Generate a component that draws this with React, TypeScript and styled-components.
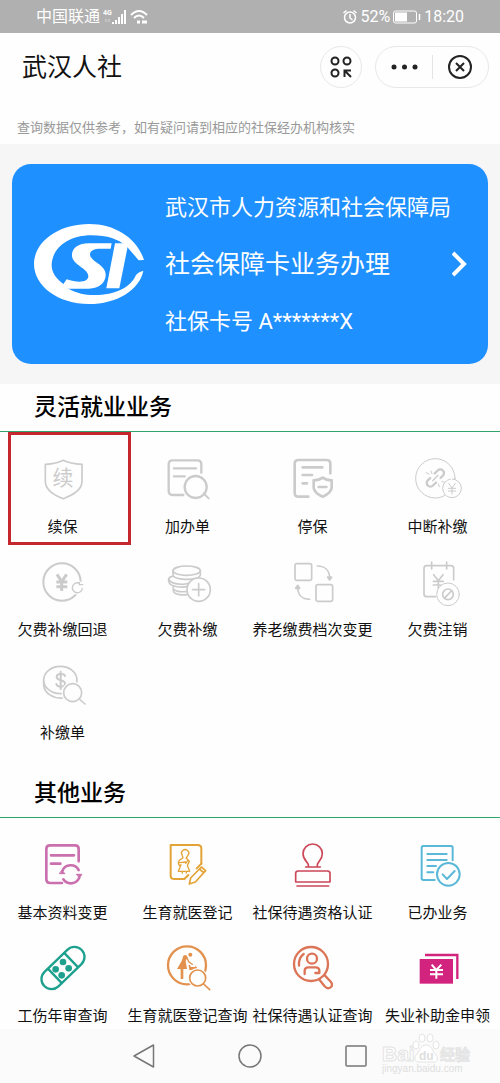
import React from "react";
import styled, { createGlobalStyle } from "styled-components";

const GlobalStyle = createGlobalStyle`
  * { box-sizing: border-box; }
  body {
    margin: 0;
    background: #fefefe;
    color: #111;
    font-family: Roboto, "Noto Sans CJK SC", sans-serif;
  }
  button {
    margin: 0;
    padding: 0;
    border: 0;
    background: none;
    color: inherit;
    font: inherit;
    cursor: pointer;
  }
  svg { display: block; flex: none; }
`;

const Page = styled.div`
  display: flex;
  flex-direction: column;
  min-height: 100vh;
`;

const StatusBar = styled.div`
  display: flex;
  align-items: center;
  justify-content: space-between;
  height: 33px;
  padding: 1px 36px 0;
  background: #b0b0b0;
  color: #fff;
  font-size: 16px;
  line-height: 24px;
`;

const StatusGroup = styled.div`
  display: flex;
  align-items: center;
  gap: 3px;
`;

const Header = styled.header`
  display: flex;
  align-items: center;
  height: 68px;
  padding: 0 11px 0 22px;
`;

const Title = styled.h1`
  flex: 1;
  margin: 0;
  padding-top: 2px;
  font-size: 25px;
  font-weight: 400;
  line-height: 36px;
`;

const RoundButton = styled.button`
  display: flex;
  align-items: center;
  justify-content: center;
  width: 42px;
  height: 42px;
  margin-right: 13px;
  border: 1px solid #e8e8e8;
  border-radius: 21px;
`;

const Capsule = styled.div`
  display: flex;
  align-items: center;
  width: 114px;
  height: 42px;
  border: 1px solid #e8e8e8;
  border-radius: 21px;
`;

const CapsuleButton = styled.button<{ $divided?: boolean }>`
  display: flex;
  flex: 1;
  align-items: center;
  justify-content: center;
  height: 24px;
  border-left: ${(p) => (p.$divided ? "1px solid #e4e4e4" : "0")};
`;

const Notice = styled.p`
  margin: 0;
  height: 43px;
  padding: 17px 17px 0;
  color: #999;
  font-size: 13px;
  line-height: 20px;
`;

const CardArea = styled.div`
  padding: 20px 12px;
  background: #f6f6f6;
`;

const Card = styled.button`
  display: flex;
  align-items: center;
  width: 100%;
  height: 200px;
  padding: 0 20px 0 22px;
  border-radius: 19px;
  background: #1e90ff;
  color: #fff;
  text-align: left;
`;

const CardText = styled.span`
  display: flex;
  flex: 1;
  flex-direction: column;
  gap: 21px;
  padding: 2px 0 0 21px;
  white-space: nowrap;
`;

const CardLine = styled.span<{ $large?: boolean }>`
  font-size: ${(p) => (p.$large ? 25 : 22)}px;
  line-height: 36px;
`;

const SectionTitle = styled.h2`
  height: 48px;
  margin: 0;
  padding: 7px 34px 0;
  border-bottom: 1px solid #2fa56b;
  color: #000;
  font-size: 23px;
  font-weight: 500;
  line-height: 34px;
`;

const Grid = styled.div<{ $bottom: number }>`
  display: grid;
  grid-template-columns: repeat(4, minmax(0, 1fr));
  gap: 21px 0;
  padding: 24px 0 ${(p) => p.$bottom}px;
`;

const Item = styled.button`
  position: relative;
  display: flex;
  flex-direction: column;
  align-items: center;
  gap: 12px;
  font-size: 15px;
  line-height: 22px;
  white-space: nowrap;
`;

const Highlight = styled.span`
  position: absolute;
  top: -24px;
  right: -6px;
  bottom: -7px;
  left: 8px;
  border: 3px solid #c4282e;
`;

const NavBar = styled.nav`
  position: relative;
  display: flex;
  align-items: center;
  justify-content: center;
  gap: 82px;
  height: 54px;
  margin-top: auto;
  background: #fbfbfb;
`;

const Watermark = styled.div`
  position: absolute;
  right: 28px;
  bottom: 8px;
`;

type IconProps = { color: string; width?: number; children: React.ReactNode };

const Icon = ({ color, width = 6, children }: IconProps) => (
  <svg
    width="48"
    height="48"
    viewBox="0 0 144 144"
    overflow="visible"
    fill="none"
    stroke={color}
    strokeWidth={width}
    strokeLinecap="round"
    strokeLinejoin="round"
    aria-hidden="true"
  >
    {children}
  </svg>
);

const GREY = "#cbcbcb";

const RenewIcon = () => (
  <Icon color={GREY} width={5}>
    <path d="M73 13C60 20 40 24 19 25V76C19 101 45 118 73 128C101 118 129 101 129 76V25C106 24 86 20 73 13Z" />
    <text x="72" y="88" textAnchor="middle" fontSize="63" fill={GREY} stroke="none">续</text>
  </Icon>
);

const AddFormIcon = () => (
  <Icon color={GREY} width={7}>
    <path d="M112 50V25Q112 13 100 13H26Q14 13 14 25V105Q14 117 26 117H58" />
    <path d="M30 37H96M30 61H62" />
    <circle cx="95" cy="93" r="33" />
    <path d="M119 112L134 127" strokeWidth="6" />
  </Icon>
);

const StopIcon = () => (
  <Icon color={GREY} width={8}>
    <path d="M124 52V23Q124 12 113 12H28Q17 12 17 23V110Q17 122 29 122H58" />
    <path d="M41 34H100M41 57H69M41 82H54M89 93H112" />
    <path d="M101 65C93 71 84 73 74 73V94C74 108 87 116 101 122C115 116 128 108 128 94V73C118 73 109 71 101 65Z" />
  </Icon>
);

const BreakIcon = () => (
  <Icon color={GREY} width={3}>
    <circle cx="64" cy="67" r="59" />
    <g transform="rotate(-45 64 66)" strokeWidth="7">
      <path d="M59 55H49A11 11 0 0 0 49 77H62" transform="translate(-6 0)" />
      <path d="M69 77H79A11 11 0 0 0 79 55H66" transform="translate(6 0)" />
    </g>
    <path d="M56 74L72 58" strokeWidth="4" />
    <path d="M51 45L54 53M37 50L45 54M73 84L76 92M84 77L90 78" />
    <circle cx="114" cy="97" r="28" fill="#fefefe" strokeDasharray="60 6" />
    <path d="M104 82L114 96L124 82M114 96V114M103 97H125M103 105H125" />
  </Icon>
);

const RefundIcon = () => (
  <Icon color={GREY} width={6}>
    <circle cx="69" cy="69" r="56" />
    <path d="M54 46L68 68L83 46M68 68V96M52 69H85M52 83H85" strokeWidth="9" strokeLinecap="butt" />
    <circle cx="115" cy="86" r="21" fill="#fefefe" stroke="none" />
    <path d="M120 72A15 15 0 1 0 130 88M131 77H121V70" strokeWidth="4" />
  </Icon>
);

const CoinsIcon = () => (
  <Icon color={GREY} width={5}>
    <ellipse cx="68" cy="35" rx="41" ry="14" />
    <path d="M27 35V47C27 66 109 66 109 47V35" />
    <path d="M25 52C9 55 14 64 15 69C17 84 59 88 72 81M15 60C18 76 56 79 74 73" />
    <path d="M28 82V96C31 106 52 109 68 107M28 90C34 98 50 99 66 98" />
    <circle cx="104" cy="92" r="35" fill="#fefefe" />
    <path d="M104 74V110M86 92H122" />
  </Icon>
);

const SwapIcon = () => (
  <Icon color={GREY} width={5}>
    <rect x="18" y="14" width="50" height="50" rx="6" />
    <rect x="81" y="77" width="50" height="50" rx="6" />
    <path d="M85 21C108 21 122 35 122 58" />
    <path d="M62 121C39 121 26 107 26 84" />
    <path d="M116 54H128L122 63ZM20 88H32L26 79Z" fill={GREY} />
  </Icon>
);

const CancelIcon = () => (
  <Icon color={GREY} width={5}>
    <path d="M119 62V28Q119 20 111 20H38Q30 20 30 28V105Q30 113 38 113H64" />
    <path d="M53 9V30M98 9V30M59 47L73 65L87 47M73 65V88M58 67H88M58 78H80" />
    <circle cx="102" cy="106" r="34" fill="#fefefe" strokeWidth="3" />
    <circle cx="102" cy="106" r="16" />
    <path d="M93 116L112 96" />
  </Icon>
);

const SearchCoinIcon = () => (
  <Icon color={GREY} width={5}>
    <ellipse cx="64" cy="54" rx="50" ry="41" />
    <path d="M14 57V70C17 94 42 110 70 108" />
    <path
      d="M78 42C76 34 53 33 53 45C53 58 78 51 78 65C78 77 54 76 52 66M65 29V81"
      strokeWidth="6"
    />
    <circle cx="101" cy="92" r="33" fill="#fefefe" stroke="none" />
    <circle cx="101" cy="92" r="27" />
    <path d="M121 111L138 126" />
  </Icon>
);

const ProfileChangeIcon = () => (
  <Icon color="#ca70ae" width={8}>
    <path d="M119 58V21Q119 10 108 10H33Q22 10 22 21V112Q22 123 33 123H69" />
    <path d="M36 40H105M36 65H64" />
    <path d="M70 87A27 27 0 0 1 119 84M121 106A27 27 0 0 1 73 112" />
    <path d="M113 97H129L122 106ZM62 95H78L69 86Z" fill="#ca70ae" strokeWidth="3" />
  </Icon>
);

const MaternityIcon = () => (
  <Icon color="#e3a437" width={6}>
    <path d="M112 65V20Q112 9 101 9H20V101Q20 111 31 111H61L73 99" />
    <path d="M112 65L98 79" />
    <path d="M76 126L80 108L112 75L125 86L94 120ZM106 81L119 92" strokeWidth="5" />
    <path
      d="M54 38A11 10 0 1 1 73 38L68 46M54 38L57 47L46 55Q40 64 47 71L51 68L43 88H77L70 70L76 58L66 48M47 62L65 60M72 55L65 64M55 88V93M67 88V93"
      strokeWidth="4"
    />
  </Icon>
);

const StampIcon = () => (
  <Icon color="#cc4758" width={5}>
    <path d="M58 75V68C57 61 42 53 42 35A29 29 0 0 1 100 35C100 53 86 60 85 68V75M50 75H94" />
    <path d="M20 120V94Q20 87 28 87H115Q123 87 123 94V120ZM24 132H119" />
  </Icon>
);

const DoneIcon = () => (
  <Icon color="#5ab9d8" width={6}>
    <path d="M116 55V17Q116 12 111 12H28Q23 12 23 17V109Q23 114 28 114H62" />
    <path d="M40 36H98M40 54H98M40 72H66M40 91H58" />
    <circle cx="103" cy="97" r="34" />
    <path d="M86 97L99 111L122 87" />
  </Icon>
);

const BandageIcon = () => (
  <Icon color="#1da18e" width={7}>
    <g transform="rotate(-44 72 69)">
      <rect x="-6" y="39" width="156" height="60" rx="30" />
      <path d="M38 40V98M106 40V98" />
    </g>
    <g fill="#1da18e" stroke="none">
      <circle cx="72" cy="51" r="10" />
      <circle cx="89" cy="70" r="10" />
      <circle cx="50" cy="73" r="10" />
      <circle cx="68" cy="91" r="10" />
    </g>
  </Icon>
);

const MaternitySearchIcon = () => (
  <Icon color="#e2924e" width={7}>
    <circle cx="69" cy="61" r="57" />
    <g fill="#e2924e" stroke="none">
      <circle cx="79" cy="29" r="6" />
      <path d="M58 32Q66 26 71 36L65 48L69 72H58V102H50V72H39L53 48Z" />
      <path d="M74 60H78L80 66H94V61L99 68V75H76Z" />
    </g>
    <path d="M69 38L74 50L85 58" strokeWidth="4" />
    <circle cx="101" cy="99" r="30" fill="#fefefe" stroke="none" />
    <circle cx="101" cy="99" r="24" strokeWidth="5" />
    <path d="M119 117L137 134" strokeWidth="5" />
  </Icon>
);

const PersonSearchIcon = () => (
  <Icon color="#dc7558" width={7}>
    <circle cx="66" cy="57" r="51" />
    <circle cx="69" cy="41" r="15" />
    <path d="M47 87V77Q47 67 58 67H80Q91 67 91 77V84H79" />
    <path d="M30 62Q28 38 44 27" />
    <path d="M90 103L107 124C119 137 136 124 126 111L108 92" />
  </Icon>
);

const AllowanceIcon = () => (
  <Icon color="#d2247f" width={7}>
    <path d="M33 30H130V102" strokeLinecap="butt" strokeLinejoin="miter" />
    <rect x="17" y="42" width="100" height="74" fill="#d2247f" stroke="none" />
    <path
      d="M53 59L67 75L82 59M67 75V101M48 75H87M48 88H87"
      stroke="#fff"
      strokeWidth="6"
      strokeLinecap="butt"
    />
  </Icon>
);

const SocialLogo = () => (
  <svg width="110" height="80" viewBox="0 0 330 240" fill="#fff" aria-hidden="true">
    <path d="M330 108C310 45 247 0 165 0C72 0 0 54 0 120C0 186 72 240 165 240C248 240 317 198 328 140C320 142 312 146 306 153C290 191 242 213 182 213C150 213 125 206 104 194L89 181C65 163 53 145 53 124C53 74 102 34 172 34C221 34 252 45 279 68L314 109Z" />
    <path d="M233 58H165C131 58 112 74 114 97C117 124 163 133 163 157C163 175 133 178 98 166L84 186L105 194H164C198 194 217 173 215 149C211 120 168 112 168 91C168 80 180 74 200 74H230Z" />
    <path d="M243 58H283L256 193H217Z" />
  </svg>
);

const flexible = [
  { label: "续保", icon: RenewIcon, marked: true },
  { label: "加办单", icon: AddFormIcon },
  { label: "停保", icon: StopIcon },
  { label: "中断补缴", icon: BreakIcon },
  { label: "欠费补缴回退", icon: RefundIcon },
  { label: "欠费补缴", icon: CoinsIcon },
  { label: "养老缴费档次变更", icon: SwapIcon },
  { label: "欠费注销", icon: CancelIcon },
  { label: "补缴单", icon: SearchCoinIcon },
];

const others = [
  { label: "基本资料变更", icon: ProfileChangeIcon },
  { label: "生育就医登记", icon: MaternityIcon },
  { label: "社保待遇资格认证", icon: StampIcon },
  { label: "已办业务", icon: DoneIcon },
  { label: "工伤年审查询", icon: BandageIcon },
  { label: "生育就医登记查询", icon: MaternitySearchIcon },
  { label: "社保待遇认证查询", icon: PersonSearchIcon },
  { label: "失业补助金申领", icon: AllowanceIcon },
];

type Service = { label: string; icon: React.ComponentType; marked?: boolean };

const Services = ({ title, items, bottom }: { title: string; items: Service[]; bottom: number }) => (
  <section>
    <SectionTitle>{title}</SectionTitle>
    <Grid $bottom={bottom}>
      {items.map(({ label, icon: Glyph, marked }) => (
        <Item key={label} type="button">
          <Glyph />
          {label}
          {marked && <Highlight />}
        </Item>
      ))}
    </Grid>
  </section>
);

const SignalIcons = () => (
  <svg width="46" height="18" viewBox="0 0 46 18" fill="none" stroke="#fff" aria-hidden="true">
    <text x="0" y="7" fontSize="7" fontWeight="700" fill="#fff" stroke="none">4G</text>
    <path d="M3 11V14M6 11V14" opacity="0.5" />
    <path d="M10 16V14M13 16V12M16 16V9M19 16V6M22 16V2" strokeWidth="2" />
    <path d="M28 7Q36 -1 44 7M31 10Q36 5 41 10" strokeWidth="2" />
    <path d="M34 14H37M39 14H44" strokeWidth="3" />
  </svg>
);

const AlarmIcon = () => (
  <svg width="14" height="16" viewBox="0 0 28 32" fill="none" stroke="#fff" strokeWidth="3" aria-hidden="true">
    <circle cx="14" cy="17" r="11" />
    <path d="M14 10V18L19 22M1 8L7 3M27 8L21 3" />
  </svg>
);

const BatteryIcon = () => (
  <svg width="28" height="14" viewBox="0 0 56 28" fill="none" stroke="#fff" strokeWidth="2" aria-hidden="true">
    <rect x="1" y="2" width="46" height="24" rx="4" />
    <rect x="4" y="5" width="24" height="18" fill="#fff" stroke="none" />
    <path d="M53 8V20" strokeWidth="3" />
  </svg>
);

export default function App() {
  return (
    <>
      <GlobalStyle />
      <Page>
        <StatusBar>
          <StatusGroup>
            <span>中国联通</span>
            <SignalIcons />
          </StatusGroup>
          <StatusGroup>
            <AlarmIcon />
            <span>52%</span>
            <BatteryIcon />
            <span>18:20</span>
          </StatusGroup>
        </StatusBar>
        <Header>
          <Title>武汉人社</Title>
          <RoundButton type="button" aria-label="小程序">
            <svg width="22" height="22" viewBox="0 0 44 44" fill="none" stroke="#222" strokeWidth="4">
              <circle cx="10" cy="10" r="7" />
              <circle cx="34" cy="10" r="7" />
              <circle cx="10" cy="34" r="7" />
              <path d="M29 42V29H42M30 30L42 42" />
            </svg>
          </RoundButton>
          <Capsule>
            <CapsuleButton type="button" aria-label="更多">
              <svg width="28" height="8" viewBox="0 0 56 16" fill="#222">
                <circle cx="8" cy="8" r="5" />
                <circle cx="29" cy="8" r="5" />
                <circle cx="50" cy="8" r="5" />
              </svg>
            </CapsuleButton>
            <CapsuleButton type="button" aria-label="关闭" $divided>
              <svg width="26" height="26" viewBox="0 0 26 26" fill="none" stroke="#222" strokeWidth="2">
                <circle cx="13" cy="13" r="11" />
                <path d="M9 9L17 17M17 9L9 17" />
              </svg>
            </CapsuleButton>
          </Capsule>
        </Header>
        <Notice>查询数据仅供参考，如有疑问请到相应的社保经办机构核实</Notice>
        <main>
          <CardArea>
            <Card type="button">
              <SocialLogo />
              <CardText>
                <CardLine>武汉市人力资源和社会保障局</CardLine>
                <CardLine $large>社会保障卡业务办理</CardLine>
                <CardLine>社保卡号 A*******X</CardLine>
              </CardText>
              <svg width="16" height="26" viewBox="0 0 16 26" fill="none" stroke="#fff" strokeWidth="4" aria-hidden="true">
                <path d="M1 2L12 13L1 24" />
              </svg>
            </Card>
          </CardArea>
          <Services title="灵活就业业务" items={flexible} bottom={26} />
          <Services title="其他业务" items={others} bottom={2} />
        </main>
        <NavBar>
          <button type="button" aria-label="返回">
            <svg width="24" height="24" viewBox="0 0 48 48" fill="none" stroke="#777" strokeWidth="3" strokeLinejoin="round">
              <path d="M43 2V46L4 24Z" />
            </svg>
          </button>
          <button type="button" aria-label="主页">
            <svg width="24" height="24" viewBox="0 0 48 48" fill="none" stroke="#777" strokeWidth="3">
              <circle cx="24" cy="24" r="22" />
            </svg>
          </button>
          <button type="button" aria-label="最近任务">
            <svg width="24" height="24" viewBox="0 0 48 48" fill="none" stroke="#777" strokeWidth="3">
              <rect x="4" y="4" width="40" height="40" rx="2" />
            </svg>
          </button>
          <Watermark>
            <svg width="90" height="44" viewBox="0 0 90 44" fill="#fff" stroke="#e4e4e4" strokeWidth="1" aria-hidden="true">
              <g fontFamily="Liberation Sans, sans-serif" fontWeight="700">
                <text x="0" y="30" fontSize="21">Bai</text>
                <path d="M44 14C38 14 38 20 34 24C31 28 34 32 39 31H50C55 32 57 28 54 24C50 20 50 14 44 14Z" />
                <ellipse cx="34" cy="14" rx="3" ry="4" />
                <ellipse cx="40" cy="7" rx="3" ry="4" />
                <ellipse cx="48" cy="7" rx="3" ry="4" />
                <ellipse cx="54" cy="14" rx="3" ry="4" />
                <text x="37" y="29" fontSize="12" fill="#dedede" stroke="none">du</text>
                <text x="58" y="29" fontSize="15" fontWeight="500" fill="#f4f4f4" fontFamily="Noto Sans CJK SC, sans-serif">经验</text>
                <text x="0" y="41" fontSize="10" fontWeight="400" fill="#dedede" stroke="none">jingyan.baidu.com</text>
              </g>
            </svg>
          </Watermark>
        </NavBar>
      </Page>
    </>
  );
}
